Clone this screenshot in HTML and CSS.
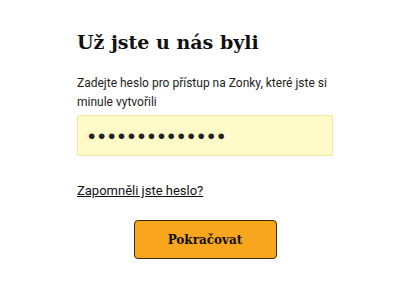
FILE: index.html
```html
<!DOCTYPE html>
<html lang="cs">
<head>
  <meta charset="UTF-8" />
  <meta name="viewport" content="width=device-width, initial-scale=1.0"/>
  <title>Přihlášení</title>
  <link rel="stylesheet" href="styles.css">
</head>
<body>
  <div class="login-box">
    <h2>Už jste u nás byli</h2>
    <p class="hint">Zadejte heslo pro přístup na Zonky, které jste si minule vytvořili</p>
    <form id="loginform" action="" method="post">
      <input type="password" name="heslo" id="heslo" value="abcdefghijklmn" />
      <a class="forgot" href="#">Zapomněli jste heslo?</a>
      <div class="actions">
        <button type="submit">Pokračovat</button>
      </div>
    </form>
  </div>
</body>
</html>
```

FILE: styles.css
```css
* {
  box-sizing: border-box;
}

body {
  margin: 0;
  padding: 0;
  background-color: #ffffff;
  font-family: Roboto, 'Liberation Sans', sans-serif;
  color: #1a1a1a;
}

.login-box {
  width: 256px;
  margin-left: 77px;
  padding-top: 30px;
}

h2 {
  margin: 0 0 20px 0;
  font-family: 'DejaVu Serif', serif;
  font-weight: bold;
  font-size: 19px;
  line-height: 24px;
  color: #111;
}

.hint {
  margin: 0 0 3px 0;
  font-size: 12px;
  line-height: 19px;
  color: #222;
}

input[type="password"] {
  display: block;
  width: 256px;
  height: 41px;
  padding: 0 10px;
  background-color: #fffbc8;
  border: 1px solid #f2e5a6;
  border-radius: 2px;
  font-size: 21px;
  letter-spacing: 2.6px;
  color: #222;
  outline: none;
}

.forgot {
  display: inline-block;
  margin-top: 27px;
  font-size: 13px;
  line-height: 16px;
  color: #111;
  text-decoration: underline;
}

.actions {
  display: flex;
  justify-content: center;
  padding-top: 21px;
}

button {
  width: 143px;
  height: 39px;
  background-color: #f9a61f;
  border: 1px solid #3a2a10;
  border-radius: 4px;
  font-family: 'DejaVu Serif', serif;
  font-weight: bold;
  font-size: 12px;
  color: #111;
  cursor: pointer;
}
```
